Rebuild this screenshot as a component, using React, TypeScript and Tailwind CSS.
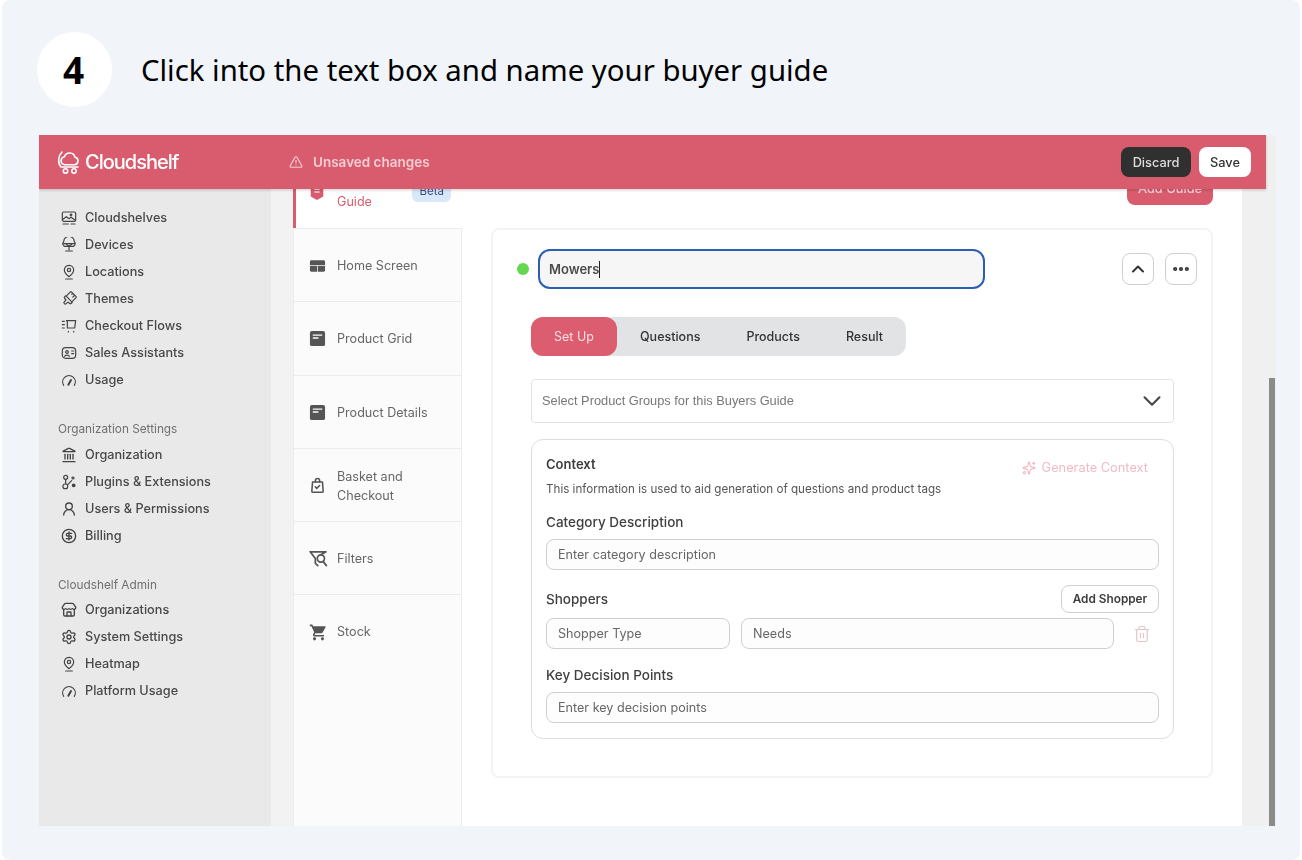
import React from "react";
import { AlertTriangle, ChevronUp, ChevronDown, Ellipsis, Landmark, UserRound, CircleDollarSign, Store, Settings, Sparkles, Trash2, PaintbrushVertical } from "lucide-react";
import { MdShoppingCart } from "react-icons/md";

type IP = { className?: string };
const S = ({ children, className = "" }: { children: React.ReactNode; className?: string }) => (
  <svg viewBox="0 0 24 24" fill="none" stroke="currentColor" strokeWidth="1.800" strokeLinecap="round" strokeLinejoin="round" className={className}>{children}</svg>
);
const Shelves = ({ className }: IP) => <S className={className}><rect x="2" y="3" width="20" height="14" rx="2" /><path d="M3 14l5-4 4 3 3-2 6 4" /><circle cx="15" cy="7.500" r="1.200" /><path d="M3 21h8M15 21h6" /></S>;
const Device = ({ className }: IP) => <S className={className}><path d="M5 14a5 5 0 0 1-1-7 8 8 0 0 1 16 0 5 5 0 0 1-1 7H5z" /><path d="M8 11l4 3 4-3M12 14v5M7 21h10" /><path d="M4 10h16" /></S>;
const Pin = ({ className }: IP) => <S className={className}><path d="M19 9c0 4.500-7 10-7 10S5 13.500 5 9a7 7 0 0 1 14 0z" /><circle cx="12" cy="9" r="2.500" /><path d="M7 22.500h10" /></S>;
const CartFlow = ({ className }: IP) => <S className={className}><path d="M8 4h14l-1.500 11H9.500V4" /><path d="M2 5h3M2 10h3M2 15h3" /><path d="M11 20v1M19 20v1" /></S>;
const Assist = ({ className }: IP) => <S className={className}><rect x="2" y="4" width="20" height="16" rx="5" /><circle cx="9" cy="10.500" r="2" /><path d="M5.500 17c.5-2.500 6.500-2.500 7 0M16 9h3M16 13h3" /></S>;
const Gauge = ({ className }: IP) => <S className={className}><path d="M4 20a9.500 9.500 0 1 1 16 0" /><path d="M11 19l4-7" strokeWidth="3" /></S>;
const Plug = ({ className }: IP) => <S className={className}><rect x="3" y="15" width="7" height="7" rx="3" /><circle cx="7" cy="5" r="3" /><path d="M7 8v7M10 16l6-6" /><circle cx="18" cy="6" r="1.500" /><circle cx="19" cy="17" r="2" fill="currentColor" /></S>;
const Brush = ({ className }: IP) => <PaintbrushVertical className={`${className} rotate-45`} strokeWidth={1.800} />;
const BarIcon = ({ className }: IP) => <svg viewBox="0 0 18 18" className={className}><rect x="1" y="1" width="16" height="16" rx="2" fill="currentColor" /><path d="M4 5.500h10M4 8.500h6" stroke="#fbfbfb" strokeWidth="1.400" /></svg>;
const HomeIcon = ({ className }: IP) => <svg viewBox="0 0 18 14" className={className}><rect x="1" y="1" width="16" height="12" rx="1.500" fill="currentColor" /><path d="M1 6.500h16M9 6.500v7" stroke="#fbfbfb" strokeWidth="0.800" /></svg>;
const Bag = ({ className }: IP) => <S className={className}><path d="M5 7h14l1 13a1.500 1.500 0 0 1-1.500 1.500h-13A1.500 1.500 0 0 1 4 20L5 7z" strokeWidth="2.200" /><path d="M9 7V5a3 3 0 0 1 6 0v2" strokeWidth="2.200" /><path d="M9 14l2 2 4-4" strokeWidth="2.200" /></S>;
const FilterIcon = ({ className }: IP) => <S className={className}><path d="M1.500 3.500h20l-6 3.500M1.500 3.500L8 12v6l3 3" strokeWidth="2.200" /><circle cx="15" cy="12" r="4.500" strokeWidth="2.200" /><path d="M18 16l4 5" strokeWidth="2.200" /></S>;
const Tag = ({ className }: IP) => <svg viewBox="0 0 16 20" className={className}><path d="M1 2a2 2 0 0 1 2-2h10a2 2 0 0 1 2 2v13l-7 4-7-4z" fill="currentColor" /><path d="M5 7h6M5 10h6" stroke="#fff" strokeWidth="1.200" /></svg>;

const Logo = () => (
  <svg viewBox="0 0 24 26" className="h-[26px] w-[24px] text-white" fill="none" stroke="currentColor" strokeWidth="1.600" strokeLinecap="round" strokeLinejoin="round">
    <path d="M7 15.500a4 4 0 0 1 .5-7.800 5.500 5.500 0 0 1 10.500.5 3.800 3.800 0 0 1-.5 7.500H7.500z" />
    <path d="M5 3C1 7 .5 14 4 18h17" />
    <circle cx="8.500" cy="22" r="2.200" /><circle cx="17" cy="22" r="2.200" />
  </svg>
);

const SideItem = ({ icon: I, label }: { icon: React.ComponentType<IP>; label: string }) => (
  <div className="flex h-[27px] items-center">
    <div className="flex w-[27px] justify-start pl-[3px]"><I className="h-[16px] w-[16px] text-[#444]" /></div>
    <span className="text-[12.700px] font-medium text-[#484848]">{label}</span>
  </div>
);
const GroupTitle = ({ children, className }: { children: string; className: string }) => (
  <div className={`flex items-center pt-[2px] text-[11.800px] text-[#707070] ${className}`}>{children}</div>
);

const TabRow = ({ icon, label }: { icon: React.ReactNode; label: React.ReactNode }) => (
  <div className="flex h-[73.300px] items-center border-b-[1.500px] border-[#ececec] pl-[15px] pt-px">
    <div className="flex w-[28px] shrink-0">{icon}</div>
    <div className="text-[12.600px] leading-[19px] text-[#666]">{label}</div>
  </div>
);

const Field = ({ placeholder, className = "" }: { placeholder: string; className?: string }) => (
  <div className={`flex h-[31px] items-center rounded-lg border border-[#cfcfcf] bg-[#fdfdfd] px-[11px] pt-[2px] text-[12.600px] text-[#666] ${className}`}>{placeholder}</div>
);

export default function App() {
  return (
    <div className="h-[860px] w-[1302px] overflow-hidden bg-white font-['Inter',sans-serif]">
      <div className="mx-[2px] h-[860px] rounded-lg bg-[#f1f5fa] pl-[37px]">
        <div className="flex h-[135px] items-start pt-[32px]">
          <div className="-ml-[2px] flex h-[75px] w-[75px] shrink-0 items-center justify-center rounded-full bg-white pr-[2px] font-['Noto_Sans',sans-serif] text-[37px] font-bold text-black">4</div>
          <h1 className="ml-[29px] mt-[15px] font-['Noto_Sans',sans-serif] text-[29.350px] leading-[46px] font-normal text-black">Click into the text box and name your buyer guide</h1>
        </div>

        <div className="flex h-[691px] w-[1237px] flex-col overflow-hidden bg-[#f0f0f0] blur-[0.5px]">
          <header className="relative z-10 flex h-[54px] w-[1227px] shrink-0 items-center bg-[#d95c6e] pl-[18px] pr-[15px] shadow-[0_1px_3px_rgba(0,0,0,0.2)]">
            <Logo />
            <span className="ml-[4px] w-[204px] text-[20px] font-medium tracking-[-1px] text-white">Cloudshelf</span>
            <AlertTriangle className="h-[14px] w-[14px] text-[#f4cdd3]" />
            <span className="ml-[10px] text-[13.500px] font-semibold text-[#f4cdd3]">Unsaved changes</span>
            <div className="ml-auto flex gap-[8px]">
              <button className="h-[30px] w-[70px] rounded-lg bg-[#303030] pt-px text-[12.800px] font-medium text-[#ddd]">Discard</button>
              <button className="h-[30px] w-[52px] rounded-lg bg-white pt-px text-[12.800px] font-medium text-[#333]">Save</button>
            </div>
          </header>

          <div className="flex min-h-0 flex-1">
            <aside className="w-[232px] shrink-0 bg-[#e9e9e9] pl-[19px] pt-[15px]">
              <SideItem icon={Shelves} label="Cloudshelves" />
              <SideItem icon={Device} label="Devices" />
              <SideItem icon={Pin} label="Locations" />
              <SideItem icon={Brush} label="Themes" />
              <SideItem icon={CartFlow} label="Checkout Flows" />
              <SideItem icon={Assist} label="Sales Assistants" />
              <SideItem icon={Gauge} label="Usage" />
              <GroupTitle className="mt-[23px] h-[25px]">Organization Settings</GroupTitle>
              <SideItem icon={Landmark} label="Organization" />
              <SideItem icon={Plug} label="Plugins & Extensions" />
              <SideItem icon={UserRound} label="Users & Permissions" />
              <SideItem icon={CircleDollarSign} label="Billing" />
              <GroupTitle className="mt-[24px] h-[23px]">Cloudshelf Admin</GroupTitle>
              <SideItem icon={Store} label="Organizations" />
              <SideItem icon={Settings} label="System Settings" />
              <SideItem icon={Pin} label="Heatmap" />
              <SideItem icon={Gauge} label="Platform Usage" />
            </aside>

            <div className="w-[22px] shrink-0 bg-[#f2f2f2]" />

            <nav className="w-[169px] shrink-0 border-l border-r border-[#ececec] bg-[#fbfbfb]">
              <div className="-mt-[33px]">
                <div className="-ml-px -mr-px flex h-[72px] items-center border-l-[3px] border-[#d95c6e] bg-white pb-px pl-[13px] pr-[11px]">
                  <div className="w-[28px] shrink-0"><Tag className="h-[18px] w-[16px] text-[#d95c6e]" /></div>
                  <div className="text-[12.600px] leading-[20px] text-[#d95c6e]">Buyers<br />Guide</div>
                  <span className="ml-auto flex h-[20px] items-center rounded-md bg-[#d9e8f8] px-[7px] pt-px text-[11.500px] text-[#33517a]">Beta</span>
                </div>
                <div className="border-t border-[#ececec]" />
                <TabRow icon={<HomeIcon className="h-[14px] w-[17px] text-[#555]" />} label="Home Screen" />
                <TabRow icon={<BarIcon className="h-[17px] w-[17px] text-[#555]" />} label="Product Grid" />
                <TabRow icon={<BarIcon className="h-[17px] w-[17px] text-[#555]" />} label="Product Details" />
                <TabRow icon={<Bag className="h-[19px] w-[17px] text-[#555]" />} label={<>Basket and<br />Checkout</>} />
                <TabRow icon={<FilterIcon className="h-[19px] w-[19px] text-[#555]" />} label="Filters" />
                <div className="flex h-[73px] items-center pl-[15px] pt-px">
                  <div className="w-[28px] shrink-0"><MdShoppingCart className="h-[19px] w-[19px] text-[#555]" /></div>
                  <div className="text-[12.600px] text-[#666]">Stock</div>
                </div>
              </div>
            </nav>

            <main className="w-[780px] shrink-0 bg-white pl-[29px] pr-[29px]">
              <div className="-mt-[20px] flex justify-end">
                <button className="h-[36px] w-[86px] rounded-lg bg-[#d95c6e] pt-[3px] text-[12.800px] font-medium text-[#f6d5da]">Add Guide</button>
              </div>
              <section className="mt-[23px] h-[550px] rounded-lg border-2 border-[#f3f3f3] pl-[38px] pr-[14px] pt-[19px]">
                <div className="flex items-center">
                  <span className="-ml-[14px] h-[12px] w-[12px] shrink-0 rounded-full bg-[#63d84f]" />
                  <div className="ml-[9px] flex h-[40px] w-[447px] items-center rounded-xl border-2 border-[#2c5fb3] bg-[#f6f6f7] px-[9px] pt-px text-[13px] font-semibold text-[#4a4a4a]">
                    Mowers<span className="h-[17px] w-px bg-[#222]" />
                  </div>
                  <button className="ml-auto flex h-[32px] w-[32px] items-center justify-center rounded-lg border border-[#cfcfcf] text-[#333]"><ChevronUp className="h-[20px] w-[20px]" strokeWidth={2.400} /></button>
                  <button className="ml-[11px] flex h-[32px] w-[32px] items-center justify-center rounded-lg border border-[#cfcfcf] text-[#333]"><Ellipsis className="h-[20px] w-[20px]" strokeWidth={3} /></button>
                </div>

                <div className="mt-[28px] flex h-[39px] w-[375px] items-center rounded-xl bg-[#e2e3e5] pt-px text-[12.500px] font-medium text-[#333]">
                  <span className="-mt-px flex h-[39px] w-[86px] items-center justify-center rounded-xl bg-[#dc5c70] pt-px font-normal text-[#f9dfe3]">Set Up</span>
                  <span className="ml-[23px]">Questions</span>
                  <span className="ml-[46px]">Products</span>
                  <span className="ml-[46px]">Result</span>
                </div>

                <div className="mt-[23px] flex h-[44px] w-[643px] items-center justify-between rounded-sm border border-[#e3e3e3] pl-[10px] pr-[6px] font-['Liberation_Sans',sans-serif] text-[12.800px] text-[#777]">
                  Select Product Groups for this Buyers Guide
                  <ChevronDown className="h-[30px] w-[30px] text-[#444]" strokeWidth={1.600} />
                </div>

                <div className="mt-[16px] h-[300px] w-[643px] rounded-xl border-[1.500px] border-[#dedede] px-[14px] pt-[15px]">
                  <div className="flex items-start justify-between">
                    <div>
                      <div className="text-[13px] font-semibold leading-[18px] text-[#3c3c3c]">Context</div>
                      <div className="mt-[8px] text-[11.640px] leading-[16px] text-[#555]">This information is used to aid generation of questions and product tags</div>
                    </div>
                    <div className="mr-[11px] mt-[3px] flex items-center gap-[6px] text-[12.800px] text-[#eebcc4]"><Sparkles className="h-[14px] w-[14px]" />Generate Context</div>
                  </div>
                  <div className="mt-[16px] text-[13.500px] font-medium leading-[18px] text-[#3f3f3f]">Category Description</div>
                  <Field placeholder="Enter category description" className="mt-[8px]" />
                  <div className="mt-[15px] flex h-[28px] items-center justify-between">
                    <span className="text-[13.500px] font-medium text-[#3f3f3f]">Shoppers</span>
                    <button className="h-[28px] w-[98px] rounded-lg border border-[#cfcfcf] pt-[2px] text-[11.800px] font-semibold text-[#3c3c3c]">Add Shopper</button>
                  </div>
                  <div className="mt-[5px] flex items-center">
                    <Field placeholder="Shopper Type" className="w-[184px]" />
                    <Field placeholder="Needs" className="ml-[11px] w-[373px]" />
                    <Trash2 className="ml-[19px] h-[18px] w-[18px] text-[#e6c6c6]" strokeWidth={1.600} />
                  </div>
                  <div className="mt-[17px] text-[13.500px] font-medium leading-[18px] text-[#3f3f3f]">Key Decision Points</div>
                  <Field placeholder="Enter key decision points" className="mt-[8px]" />
                </div>
              </section>
            </main>

            <div className="flex flex-1 justify-start bg-[#f0f0f0]">
              <div className="ml-[27px] mt-[189px] h-[448px] w-[6px] bg-[#8b8b8b]" />
            </div>
          </div>
        </div>
      </div>
    </div>
  );
}
